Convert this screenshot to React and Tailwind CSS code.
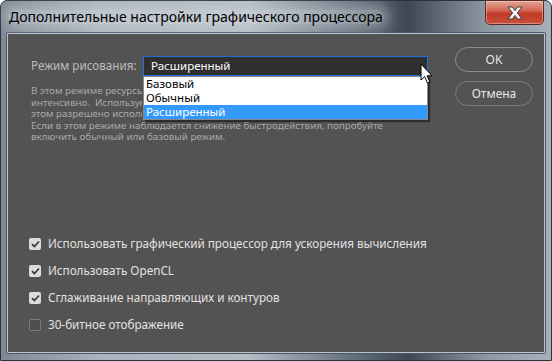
import React from "react";

const FONT = { fontFamily: '"Noto Sans", "Open Sans", sans-serif' };

function Check({ checked }) {
  return checked ? (
    <span className="flex h-[12px] w-[12px] items-center justify-center rounded-[2px] bg-[#dcdcdc]">
      <svg width="9" height="8" viewBox="0 0 9 8">
        <path d="M1 4.2 L3.4 6.5 L8 1.5" fill="none" stroke="#3a3a3a" strokeWidth="1.8" />
      </svg>
    </span>
  ) : (
    <span className="h-[12px] w-[12px] rounded-[2px] border border-[#7a7a7a] bg-[#4e4e4e]" />
  );
}

function Cursor() {
  return (
    <svg className="absolute left-[412px] top-[29px] z-20" width="14" height="22" viewBox="0 0 14 22">
      <path d="M1 1 L1 17 L4.6 13.6 L7.4 20 L9.8 19 L7.1 12.8 L12 12.8 Z" fill="#fff" stroke="#000" strokeWidth="1" strokeLinejoin="round" />
    </svg>
  );
}

export default function App() {
  const options = ["Базовый", "Обычный", "Расширенный"];
  const checks = [
    ["Использовать графический процессор для ускорения вычисления", true],
    ["Использовать OpenCL", true],
    ["Сглаживание направляющих и контуров", true],
    ["30-битное отображение", false],
  ];

  return (
    <div className="relative h-[361px] w-[552px] overflow-hidden bg-white" style={FONT}>
      <div className="flex h-full w-full flex-col rounded-t-[7px] border border-[#2b323a] bg-[linear-gradient(90deg,#7d8893_0%,#aab3bc_18%,#b3bbc3_45%,#6b7783_62%,#3d4853_74%,#8c97a2_88%,#a7b0b9_100%)]">
        {/* title bar */}
        <div className="relative flex h-[32px] shrink-0 items-center pl-[7px]">
          <span className="whitespace-nowrap rounded-full bg-[#dfe4e9]/40 px-[1px] text-[14px] leading-none text-black shadow-[0_0_12px_6px_rgba(220,226,232,0.35)]">
            Дополнительные настройки графического процессора
          </span>
          <div className="absolute right-[7px] top-[-1px] flex h-[25px] w-[59px] items-center justify-center rounded-b-[5px] border border-[#5a2a22] bg-[linear-gradient(180deg,#e2a595_0%,#d36a55_40%,#bf3a26_55%,#c9503a_100%)] shadow-[inset_0_0_0_1px_rgba(255,255,255,0.35)]">
            <svg width="18" height="14" viewBox="0 0 18 14">
              <path d="M2 1 H6.5 L9 4.6 L11.5 1 H16 L11.4 7 L16 13 H11.5 L9 9.4 L6.5 13 H2 L6.6 7 Z" fill="#f4f4f4" stroke="#3b3b3b" strokeWidth="1" strokeLinejoin="round" />
            </svg>
          </div>
        </div>

        {/* client */}
        <div className="mx-[6px] mb-[7px] flex-1 rounded-[1px] border border-[#b9c4cf] shadow-[0_0_0_1px_#4a5868]">
          <div className="relative flex h-full flex-col bg-[#535353]">
            <div className="flex">
              <div className="flex-1 pl-[23px] pt-[22px]">
                <div className="flex items-center">
                  <span className="w-[112px] whitespace-nowrap text-[11.7px] text-[#bdbdbd]">Режим рисования:</span>
                  <div className="relative">
                    <div className="flex h-[20px] w-[285px] items-center border border-[#1f6fd6] bg-[#2f2f2f] pl-[7px] text-[11.5px] text-white">
                      Расширенный
                    </div>
                    <div className="absolute left-0 top-[20px] z-10 w-[285px] border border-[#8a8a8a] bg-white shadow-[2px_2px_1px_rgba(0,0,0,0.45)]">
                      {options.map((o) => (
                        <div
                          key={o}
                          className={`h-[14px] pl-[2px] text-[11.5px] leading-[14px] ${
                            o === "Расширенный" ? "bg-[#3399ff] text-white" : "text-black"
                          }`}
                        >
                          {o}
                        </div>
                      ))}
                    </div>
                  </div>
                </div>
                <div className="mt-[9px] whitespace-nowrap text-[9.8px] leading-[11.5px] text-[#a9a9a9]">
                  <div className="w-[111px] overflow-hidden">В этом режиме ресурсы</div>
                  <div className="w-[111px] overflow-hidden">интенсивно.&nbsp; Используе</div>
                  <div className="w-[111px] overflow-hidden">этом разрешено исполь</div>
                  <div>Если в этом режиме наблюдается снижение быстродействия, попробуйте</div>
                  <div>включить обычный или базовый режим.</div>
                </div>
              </div>
              <div className="flex w-[89px] flex-col gap-[9px] pr-[11px] pt-[13px]">
                <button className="h-[25px] w-[78px] rounded-full border border-[#8c8c8c] text-[12px] text-[#e6e6e6]">
                  OK
                </button>
                <button className="h-[25px] w-[78px] rounded-full border border-[#7c7c7c] text-[12px] text-[#e6e6e6]">
                  Отмена
                </button>
              </div>
            </div>

            <div className="mt-auto flex flex-col gap-[10px] pb-[19px] pl-[21px]">
              {checks.map(([label, on]) => (
                <div key={label} className="flex h-[17px] items-center gap-[7px]">
                  <Check checked={on} />
                  <span className="whitespace-nowrap text-[11.7px] text-[#e2e2e2]">{label}</span>
                </div>
              ))}
            </div>
            <Cursor />
          </div>
        </div>
      </div>
    </div>
  );
}
